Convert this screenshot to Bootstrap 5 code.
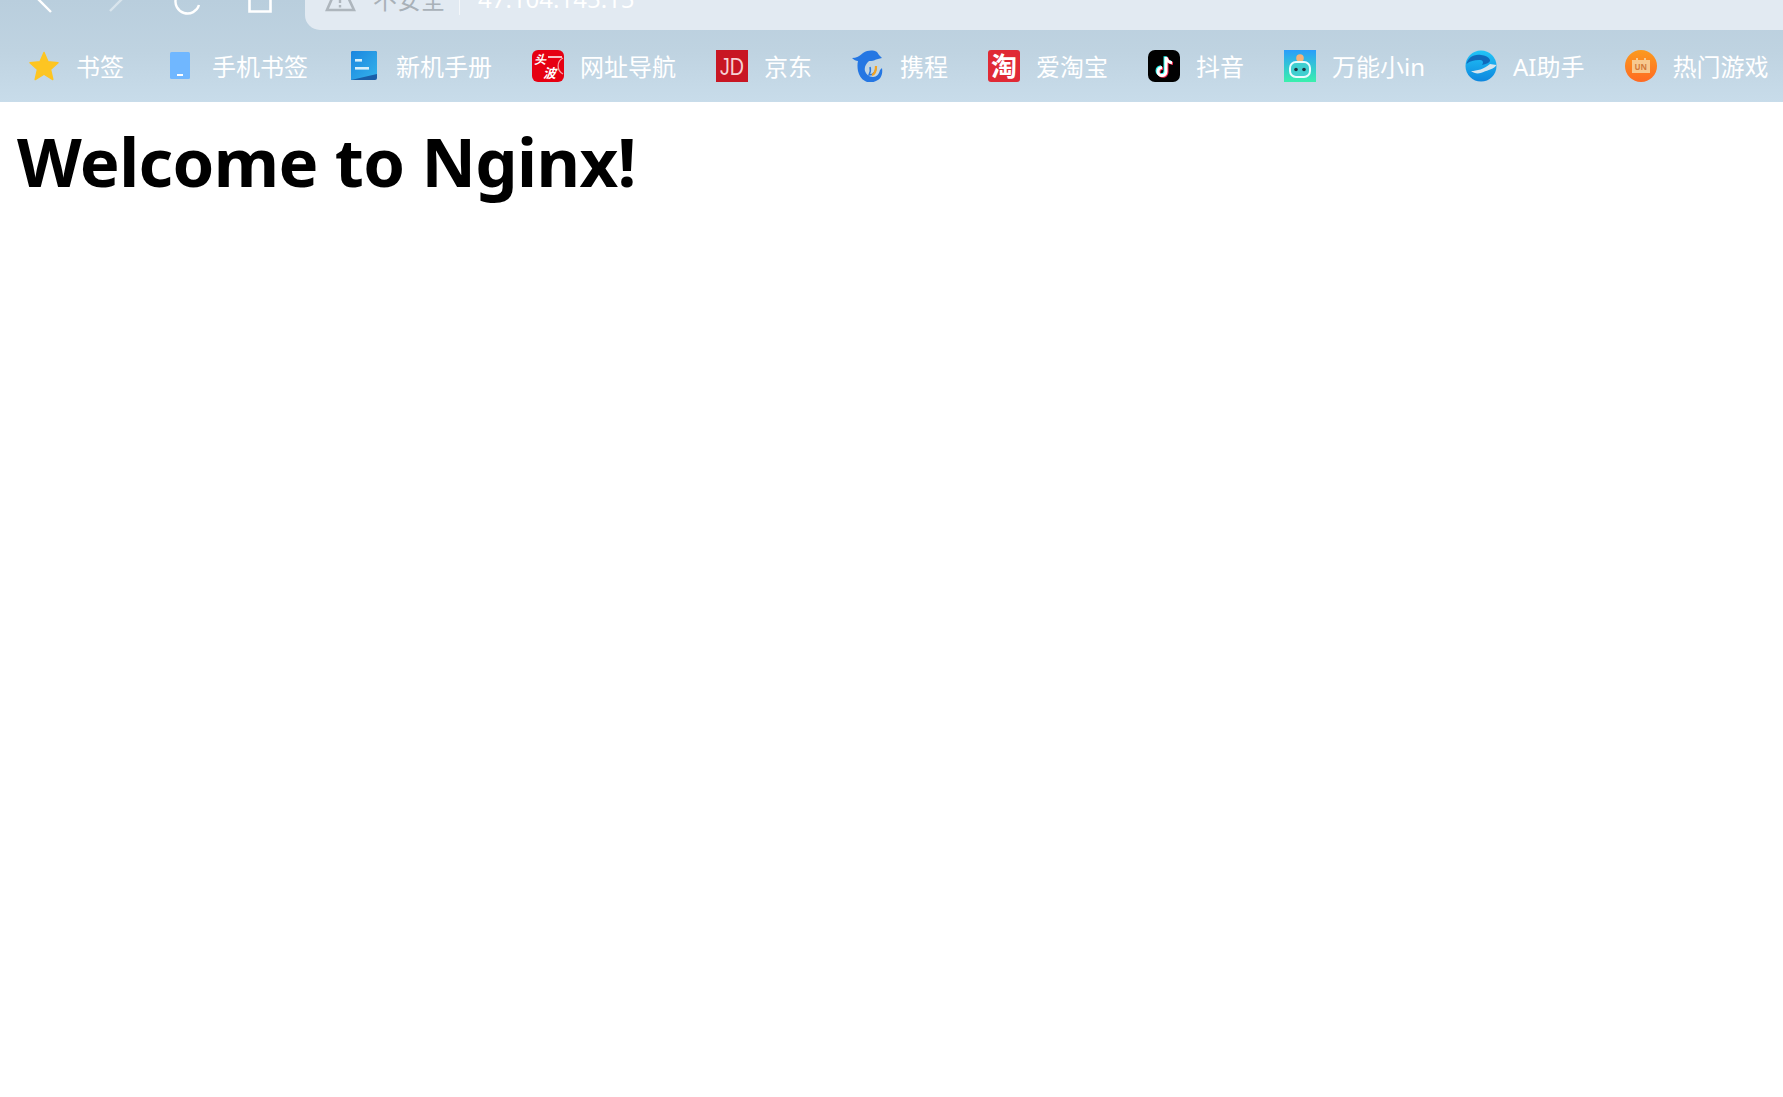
<!DOCTYPE html>
<html lang="zh-CN">
<head>
<meta charset="utf-8">
<title>Welcome to Nginx!</title>
<link href="https://cdn.jsdelivr.net/npm/bootstrap@5.3.0/dist/css/bootstrap.min.css" rel="stylesheet">
<style>
html, body { background: #fff; overflow: hidden; }
.chrome-top { height: 102px; background: linear-gradient(180deg, #b9cedd 0%, #bfd3e1 50%, #c8dcea 100%); }
.tool-row { height: 30px; overflow: hidden; }
.tool-btns { width: 305px; height: 30px; flex: none; }
.tool-svg { position: absolute; top: 0; left: 0; }
.addr-bar { height: 30px; background: #e2eaf2; border-bottom-left-radius: 15px; padding-left: 19px; color: #a9b1b8; font: 24px/24px "Noto Sans CJK SC", "Liberation Sans", sans-serif; }
.addr-warn { margin-top: -14px; margin-right: 17px; flex: none; }
.addr-sep { width: 1px; height: 15px; background: #f4f7fa; margin: 0 18px 0 14px; align-self: flex-start; flex: none; }
.addr-ip { color: #fff; font-family: "Noto Sans", sans-serif; }
.addr-label, .addr-ip { margin-top: -13px; white-space: nowrap; }
.mark-row { height: 72px; padding: 20px 0 0 28px; gap: 40px; white-space: nowrap; }
.mark-item { gap: 16px; height: 32px; color: #fff; font: 400 24px/34px "Noto Sans", "Noto Sans CJK SC", sans-serif; }
.mark-item svg { flex: none; display: block; }
.page-title { margin: 15px 0 0 17px; color: #000; font: 700 67px/88px "Noto Sans", "Open Sans", sans-serif; letter-spacing: -.6px; }
.ico-txt { font-family: "Noto Sans CJK SC", sans-serif; font-weight: 700; }
</style>
</head>
<body>
<header class="chrome-top">
  <div class="tool-row d-flex">
    <div class="tool-btns position-relative">
      <svg class="tool-svg" width="305" height="30" fill="none" stroke-linecap="butt">
        <path d="M33-6 51 12" stroke="#fff" stroke-width="2.4"/>
        <path d="M128-7 110 11" stroke="#fff" stroke-opacity=".45" stroke-width="2.4"/>
        <path d="M176-2a11.500 11.500 0 0 0 23 7" stroke="#fff" stroke-width="2.4"/>
        <path d="M249.500-6V11.500H270.500V-6" stroke="#fff" stroke-width="2.6"/>
      </svg>
    </div>
    <div class="addr-bar flex-grow-1 d-flex">
      <svg class="addr-warn" width="32" height="26" viewBox="0 0 32 26" fill="none"><path d="M16-6 30 24H3Z" stroke="#aeb6bd" stroke-width="2.6"/><path d="M16 11v6M16 19v2.500" stroke="#aeb6bd" stroke-width="2.4"/></svg>
      <span class="addr-label">不安全</span>
      <span class="addr-sep"></span>
      <span class="addr-ip">47.104.145.15</span>
    </div>
  </div>
  <nav class="mark-row d-flex">
    <a class="mark-item d-flex text-decoration-none" href="#">
      <svg width="32" height="32" viewBox="0 0 32 32"><path d="M16 2.500 20 11.800 30 12.800 22.500 19.500 24.800 29.500 16 24.200 7.200 29.500 9.500 19.500 2 12.800 12 11.800Z" fill="#fdc522" stroke="#fdc522" stroke-width="1.500" stroke-linejoin="round"/></svg>
      <span>书签</span>
    </a>
    <a class="mark-item d-flex text-decoration-none" href="#">
      <svg width="32" height="32" viewBox="0 0 32 32"><rect x="6" y="2" width="20" height="27" rx="1.500" fill="#70b7ff"/><rect x="13" y="24" width="6" height="2" fill="#fff"/></svg>
      <span>手机书签</span>
    </a>
    <a class="mark-item d-flex text-decoration-none" href="#">
      <svg width="32" height="32" viewBox="0 0 32 32"><defs><linearGradient id="g1" x1="0" y1="0" x2="1" y2="1"><stop offset="0" stop-color="#1b86e0"/><stop offset="1" stop-color="#35b3ea"/></linearGradient></defs><path d="M3 3a2 2 0 0 1 2-2H27a2 2 0 0 1 2 2V28a2 2 0 0 1-2 2H3Z" fill="#1a5ea8"/><path d="M3 3a2 2 0 0 1 2-2H27a2 2 0 0 1 2 2V24L3 30Z" fill="url(#g1)"/><rect x="7" y="9" width="7" height="2.600" fill="#d8f0fb"/><rect x="7" y="17" width="14" height="2.600" fill="#d8f0fb"/></svg>
      <span>新机手册</span>
    </a>
    <a class="mark-item d-flex text-decoration-none" href="#">
      <svg width="32" height="32" viewBox="0 0 32 32"><rect width="32" height="32" rx="6" fill="#e60012"/><path d="M31 8a9 9 0 0 0 0 16" fill="none" stroke="#f3a0a5" stroke-width="1.300"/><text class="ico-txt" x="2" y="14" font-size="12" fill="#fff" font-style="italic">头</text><text class="ico-txt" x="11" y="28" font-size="13" fill="#fff" font-style="italic">波</text><path d="M16 7H30" stroke="#fff" stroke-width="1.500"/></svg>
      <span>网址导航</span>
    </a>
    <a class="mark-item d-flex text-decoration-none" href="#">
      <svg width="32" height="32" viewBox="0 0 32 32"><rect width="32" height="32" fill="#c81623"/><text x="4" y="25" font-size="24" fill="#f6d2d3" font-family="Liberation Sans, sans-serif" textLength="24" lengthAdjust="spacingAndGlyphs">JD</text></svg>
      <span>京东</span>
    </a>
    <a class="mark-item d-flex text-decoration-none" href="#">
      <svg width="32" height="32" viewBox="0 0 32 32"><path d="M0 8C4 8 8 6 11 3c5-3 10-3 14-1l2 3 3 3-6 1.500c-2 1-4 1.500-7 1.500-3 3-5 6-4 10 1 3 4 6 8 6 4 0 6-3 7-7l2-2c1 6-1 11-6 13-4 2-8 2-11 0-4-2-6-6-7-10-.7-4-.7-7 0-10C4 11 2 10 0 8Z" fill="#2577e3"/><path d="M18 17c1 3 0 6-1 8 4 0 7-3 7-8" fill="none" stroke="#2577e3" stroke-width="1.500"/><path d="M20 25c3-1 4-4 4-9" fill="none" stroke="#f5a320" stroke-width="2.200"/></svg>
      <span>携程</span>
    </a>
    <a class="mark-item d-flex text-decoration-none" href="#">
      <svg width="32" height="32" viewBox="0 0 32 32"><rect width="32" height="32" rx="3" fill="#e02a35"/><text class="ico-txt" x="3" y="25.500" font-size="26" fill="#fff">淘</text></svg>
      <span>爱淘宝</span>
    </a>
    <a class="mark-item d-flex text-decoration-none" href="#">
      <svg width="32" height="32" viewBox="0 0 32 32"><rect width="32" height="32" rx="7" fill="#010101"/><path d="M18 7v14.500a4 4 0 1 1-4-4M18 7c.500 3 3 5.500 6 5.800" fill="none" stroke="#25f4ee" stroke-width="3" transform="translate(-1 -.8)"/><path d="M18 7v14.500a4 4 0 1 1-4-4M18 7c.500 3 3 5.500 6 5.800" fill="none" stroke="#fe2c55" stroke-width="3" transform="translate(1 .8)"/><path d="M18 7v14.500a4 4 0 1 1-4-4M18 7c.500 3 3 5.500 6 5.800" fill="none" stroke="#fff" stroke-width="3"/></svg>
      <span>抖音</span>
    </a>
    <a class="mark-item d-flex text-decoration-none" href="#">
      <svg width="32" height="32" viewBox="0 0 32 32"><defs><linearGradient id="g2" x1="0" y1="0" x2="0" y2="1"><stop offset="0" stop-color="#2a9dfb"/><stop offset="1" stop-color="#3af0ad"/></linearGradient></defs><rect width="32" height="32" fill="url(#g2)"/><circle cx="16" cy="8" r="3.800" fill="#f6b27a"/><rect x="6" y="12" width="20" height="15" rx="6" fill="#3fcfd0" stroke="#eafcff" stroke-width="2"/><circle cx="12" cy="19.500" r="1.800" fill="#1f3140"/><circle cx="20" cy="19.500" r="1.800" fill="#1f3140"/></svg>
      <span>万能小in</span>
    </a>
    <a class="mark-item d-flex text-decoration-none" href="#">
      <svg width="32" height="32" viewBox="0 0 32 32"><defs><linearGradient id="g3" x1="0" y1="0" x2="0" y2="1"><stop offset="0" stop-color="#22c5f7"/><stop offset="1" stop-color="#0d86de"/></linearGradient></defs><circle cx="16" cy="16" r="15.500" fill="url(#g3)"/><path d="M1.500 14C3 8 8 4 16 5c4 .5 8 2 9 5 .5 2-3 4-8 5 2-3 1-5-3-5-5 0-9 1-12.500 4Z" fill="#0f5db0" opacity=".85"/><path d="M6 21c6 0 13-2 19-7l6.500 1c-2 4-9 5-13 7-4 2-9 2-12.500-1Z" fill="#d5e5ef"/></svg>
      <span>AI助手</span>
    </a>
    <a class="mark-item d-flex text-decoration-none" href="#">
      <svg width="32" height="32" viewBox="0 0 32 32"><defs><linearGradient id="g4" x1="0" y1="0" x2="0" y2="1"><stop offset="0" stop-color="#fb9a1e"/><stop offset="1" stop-color="#ff6a22"/></linearGradient></defs><circle cx="16" cy="16" r="16" fill="url(#g4)"/><path d="M7 10H11V8H13V10H19V8H21V10H25V23H7Z" fill="#f7c98f"/><text x="9.500" y="20" font-size="8" font-weight="700" fill="#d27a3a" font-family="Noto Sans, sans-serif">UN</text></svg>
      <span>热门游戏</span>
    </a>
  </nav>
</header>
<main>
  <h1 class="page-title">Welcome to Nginx!</h1>
</main>
<script src="https://cdn.jsdelivr.net/npm/bootstrap@5.3.0/dist/js/bootstrap.bundle.min.js"></script>
</body>
</html>
